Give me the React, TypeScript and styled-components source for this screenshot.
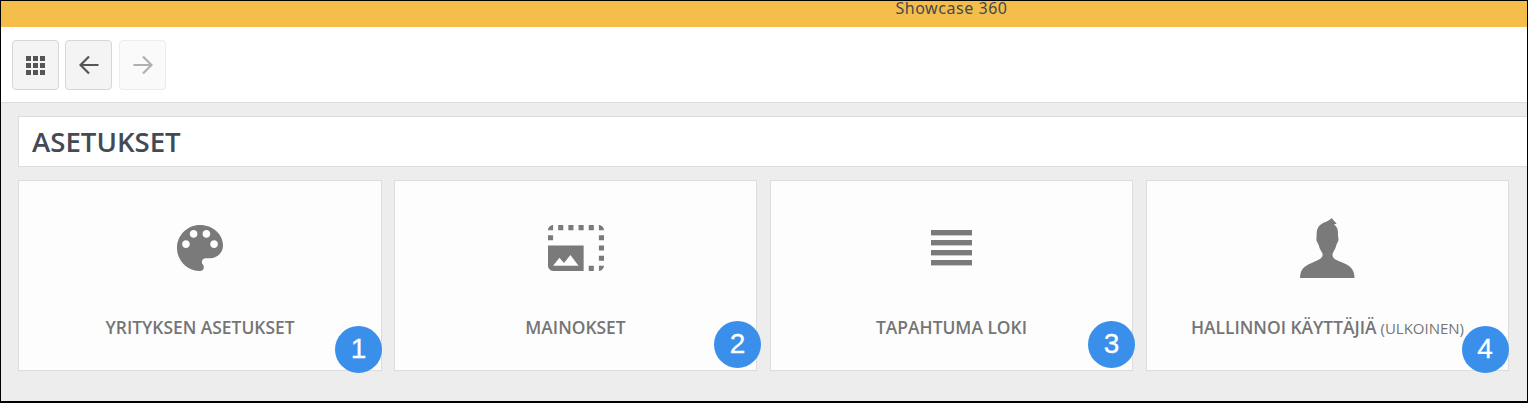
import React from 'react';
import styled, { createGlobalStyle } from 'styled-components';

const GlobalStyle = createGlobalStyle`
  html, body {
    margin: 0;
    padding: 0;
    background: #fff;
  }
`;

const Frame = styled.div`
  box-sizing: border-box;
  width: 1528px;
  height: 403px;
  border: 1px solid #000;
  border-bottom-width: 2px;
  overflow: hidden;
  background: #ededed;
  font-family: 'Open Sans', sans-serif;
`;

const Banner = styled.div`
  height: 26px;
  padding-left: 375px;
  background: #f5bd4a;
  color: #44494f;
  font-family: 'Noto Sans', sans-serif;
  font-size: 16px;
  line-height: 15px;
  letter-spacing: 0.55px;
  text-align: center;
`;

const Toolbar = styled.div`
  display: flex;
  align-items: flex-start;
  gap: 6px;
  height: 76px;
  box-sizing: border-box;
  padding: 13px 0 0 11px;
  background: #fff;
  border-bottom: 1px solid #dcdcdc;
`;

const ToolButton = styled.button<{ $disabled?: boolean; $gapLeft?: boolean }>`
  display: flex;
  align-items: center;
  justify-content: center;
  width: 47px;
  height: 50px;
  padding: 0;
  margin-left: ${(p) => (p.$gapLeft ? '1px' : '0')};
  border: 1px solid ${(p) => (p.$disabled ? '#ececec' : '#d6d6d6')};
  border-radius: 4px;
  background: ${(p) => (p.$disabled ? '#fafafa' : '#f4f4f4')};
  color: ${(p) => (p.$disabled ? '#b0b0b0' : '#555')};
`;

const Content = styled.div`
  padding: 13px 0 0 17px;
`;

const TitleBar = styled.div`
  box-sizing: border-box;
  height: 51px;
  margin-right: -20px;
  padding-left: 13px;
  background: #fff;
  border: 1px solid #dcdcdc;
`;

const Title = styled.h1`
  margin: 0;
  color: #434a54;
  font-size: 27.6px;
  font-weight: 600;
  line-height: 48px;
`;

const Cards = styled.div`
  display: grid;
  grid-template-columns: repeat(4, 363px);
  column-gap: 13px;
  margin-top: 13px;
`;

const Card = styled.div`
  position: relative;
  box-sizing: border-box;
  height: 191px;
  display: flex;
  flex-direction: column;
  align-items: center;
  padding-top: 37px;
  background: #fdfdfd;
  border: 1px solid #dcdcdc;

  &:first-child {
    margin-right: -1px;
  }
`;

const IconSlot = styled.div`
  display: flex;
  align-items: center;
  justify-content: center;
  height: 60px;
  color: #7a7a7a;
`;

const Label = styled.div`
  margin-top: 38px;
  color: #757575;
  font-size: 17.4px;
  font-weight: 600;
  line-height: 22px;
`;

const Note = styled.span`
  font-size: 15px;
  font-weight: 400;
`;

const Badge = styled.div<{ $right: number; $bottom: number }>`
  position: absolute;
  right: ${(p) => p.$right}px;
  bottom: ${(p) => p.$bottom}px;
  width: 47px;
  height: 47px;
  border-radius: 50%;
  background: #3a8fea;
  color: #fff;
  font-family: 'Liberation Sans', Arial, sans-serif;
  font-size: 28px;
  line-height: 45px;
  text-align: center;
  -webkit-text-stroke: 0.3px #fff;
`;

const AppsIcon = () => (
  <svg width="19" height="19" viewBox="0 0 19 19" fill="currentColor">
    {[0, 7, 14].map((y) =>
      [0, 7, 14].map((x) => <rect key={`${x}-${y}`} x={x} y={y} width="5" height="5" />),
    )}
  </svg>
);

const ArrowIcon = ({ flip }: { flip?: boolean }) => (
  <svg width="20" height="20" viewBox="0 0 20 20" fill="none" stroke="currentColor" strokeWidth="2.2">
    <path d={flip ? 'M0.5 10H18.5M10 1.5L18.5 10L10 18.5' : 'M19.5 10H1.5M10 1.5L1.5 10L10 18.5'} />
  </svg>
);

const PaletteIcon = () => (
  <svg width="46" height="46" viewBox="3 3 18 18" fill="currentColor">
    <path d="M12 3c-4.97 0-9 4.03-9 9s4.03 9 9 9c.83 0 1.5-.67 1.5-1.5 0-.39-.15-.74-.39-1.01-.23-.26-.38-.61-.38-.99 0-.83.67-1.5 1.5-1.5H16c2.76 0 5-2.24 5-5 0-4.42-4.03-8-9-8zm-5.5 9c-.83 0-1.5-.67-1.5-1.5S5.67 9 6.5 9 8 9.67 8 10.5 7.33 12 6.5 12zm3-4C8.67 8 8 7.33 8 6.5S8.67 5 9.5 5s1.5.67 1.5 1.5S10.33 8 9.5 8zm5 0c-.83 0-1.5-.67-1.5-1.5S13.67 5 14.5 5s1.5.67 1.5 1.5S15.33 8 14.5 8zm3 4c-.83 0-1.5-.67-1.5-1.5S16.67 9 17.5 9s1.5.67 1.5 1.5-.67 1.5-1.5 1.5z" />
  </svg>
);

const PhotoSizeIcon = () => (
  <svg width="56" height="46" viewBox="1 3 22 18" fill="currentColor">
    <path d="M21 15h2v2h-2v-2zm0-4h2v2h-2v-2zm2 8h-2v2c1 0 2-1 2-2zM13 3h2v2h-2V3zm8 4h2v2h-2V7zm0-4v2h2c0-1-1-2-2-2zM1 7h2v2H1V7zm16-4h2v2h-2V3zm0 16h2v2h-2v-2zM3 3C2 3 1 4 1 5h2V3zm6 0h2v2H9V3zM5 3h2v2H5V3zm-4 8v8c0 1.1.9 2 2 2h12V11H1zm2 8l2.5-3.21 1.79 2.15 2.5-3.22L13 19H3z" />
  </svg>
);

const LinesIcon = () => (
  <svg width="41" height="36" viewBox="0 0 41 36" fill="currentColor">
    {[0, 10, 20, 30].map((y) => (
      <rect key={y} x="0" y={y} width="41" height="5.4" />
    ))}
  </svg>
);

const PersonIcon = () => (
  <svg width="55" height="60" viewBox="0 0 55 60" fill="currentColor">
    <path d="M31.7 0C30.5 2 27 3.2 23.5 4.8C19 7 16.8 10.5 16.7 15.5C16.7 18 16.2 20 16.5 22.5C16.8 24.5 18.2 25 18.8 27.5C19.6 31 21.5 33.5 22.5 35.5C23 38 22 39.5 19 41.5C14.5 44 8.5 45.5 4.5 49C1.5 51.5 0 55 0 60H54.5C54.5 55 53 51.5 50 48.8C46 45.5 40 44 35.5 41.5C33 39.8 32 38 32.7 35.5C33.8 33 35.6 30.5 36.4 27C37 24.8 38.4 24 38.5 21.8C38.6 20 37.9 19 38 16.5C38.2 12.5 37.5 9 34 6.3C35 6 36 6 36.8 6.3C35.5 3.8 33 2 31.7 0Z" />
  </svg>
);

const items = [
  { icon: <PaletteIcon />, label: 'YRITYKSEN ASETUKSET', badge: 1, right: -1, bottom: -3 },
  { icon: <PhotoSizeIcon />, label: 'MAINOKSET', badge: 2, right: -5, bottom: 2.5 },
  { icon: <LinesIcon />, label: 'TAPAHTUMA LOKI', badge: 3, right: -3, bottom: 2.5 },
  { icon: <PersonIcon />, label: 'HALLINNOI KÄYTTÄJIÄ', note: '(ULKOINEN)', badge: 4, right: -0.5, bottom: -2.5 },
];

export default function App() {
  return (
    <Frame>
      <GlobalStyle />
      <Banner>Showcase 360</Banner>
      <Toolbar>
        <ToolButton><AppsIcon /></ToolButton>
        <ToolButton><ArrowIcon /></ToolButton>
        <ToolButton $disabled $gapLeft><ArrowIcon flip /></ToolButton>
      </Toolbar>
      <Content>
        <TitleBar>
          <Title>ASETUKSET</Title>
        </TitleBar>
        <Cards>
          {items.map((item) => (
            <Card key={item.badge}>
              <IconSlot>{item.icon}</IconSlot>
              <Label>
                {item.label}
                {item.note && <Note> {item.note}</Note>}
              </Label>
              <Badge $right={item.right} $bottom={item.bottom}>{item.badge}</Badge>
            </Card>
          ))}
        </Cards>
      </Content>
    </Frame>
  );
}
